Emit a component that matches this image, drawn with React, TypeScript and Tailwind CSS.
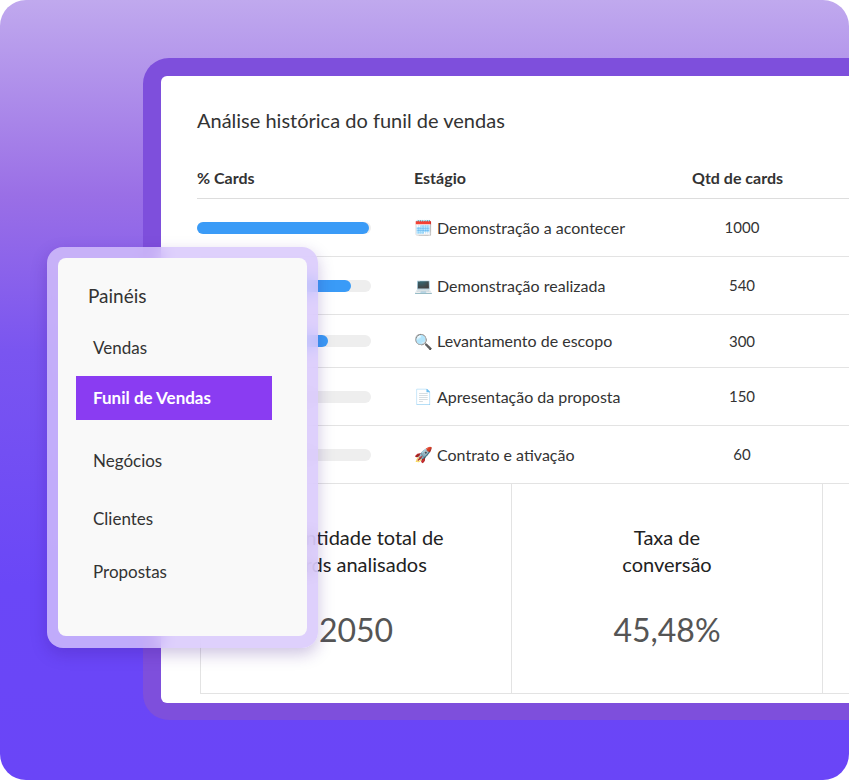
import React from "react";

const rows = [
  { icon: "🗓️", label: "Demonstração a acontecer", qtd: "1000", w: 172 },
  { icon: "💻", label: "Demonstração realizada", qtd: "540", w: 154 },
  { icon: "🔍", label: "Levantamento de escopo", qtd: "300", w: 131 },
  { icon: "📄", label: "Apresentação da proposta", qtd: "150", w: 90 },
  { icon: "🚀", label: "Contrato e ativação", qtd: "60", w: 60 },
];

export default function App() {
  return (
    <div
      className="relative w-[849px] h-[780px] overflow-hidden rounded-[26px] bg-[linear-gradient(180deg,#c0a9ee_0%,#9a6fe6_25%,#7a55f0_45%,#6a47f7_75%,#6a45f7_100%)]"
      style={{ fontFamily: "Lato, 'Open Sans', sans-serif" }}
    >
      <div className="ml-[143px] mt-[58px] rounded-l-[26px] bg-[#7e4fdc] pl-[18px] pt-[18px] pb-[17px]">
        <div className="h-[627px] rounded-l-md bg-white pl-[36px] pt-[32px]">
          <h1 className="text-[20px] text-[#333] leading-[24px]">Análise histórica do funil de vendas</h1>
          <div className="mt-[34px] flex h-[33px] items-start border-b border-[#ddd] text-[16px] font-bold text-[#333]">
            <div className="w-[217px]">% Cards</div>
            <div className="w-[278px]">Estágio</div>
            <div>Qtd de cards</div>
          </div>
          {rows.map((r, i) => (
            <div key={i} className={`flex items-center border-b border-[#e3e3e3] text-[16px] text-[#333] ${i === 3 ? "h-[58px]" : i === 2 ? "h-[53px]" : "h-[58px]"}`}>
              <div className="w-[217px]">
                <div className="h-[12px] w-[174px] rounded-full bg-[#eeeeee]">
                  <div className="h-[12px] rounded-full bg-[#3a9bf7]" style={{ width: r.w }} />
                </div>
              </div>
              <div className="w-[278px] flex items-center gap-[4px]">
                <span className="text-[15px]">{r.icon}</span>
                <span>{r.label}</span>
              </div>
              <div className="w-[100px] text-center text-[15px]">{r.qtd}</div>
            </div>
          ))}
          <div className="ml-[3px] flex h-[210px] border-b border-[#e3e3e3]">
            {[
              ["Quantidade total de", "cards analisados", "2050"],
              ["Taxa de", "conversão", "45,48%"],
              ["", "", ""],
            ].map((c, i) => (
              <div key={i} className={`flex w-[311px] shrink-0 flex-col items-center border-l border-[#e3e3e3] pt-[40px] ${i === 2 ? "" : ""}`}>
                <div className="text-center text-[20px] leading-[27px] text-[#222]">{c[0]}<br />{c[1]}</div>
                <div className="mt-[28px] text-[32px] text-[#555]">{c[2]}</div>
              </div>
            ))}
          </div>
        </div>
      </div>

      <div className="absolute left-[47px] top-[247px] w-[271px] h-[401px] rounded-[16px] bg-[#d6c4fb]/80 p-[11px] shadow-[0_6px_16px_rgba(60,20,140,0.25)] backdrop-blur-sm">
        <div className="h-[378px] rounded-[8px] bg-[#f9f9f9] pt-[24px]">
          <div className="pl-[30px] text-[19px] text-[#333]">Painéis</div>
          <div className="mt-[24px] pl-[35px] text-[17px] text-[#333]">Vendas</div>
          <div className="mt-[16px] ml-[18px] flex h-[44px] w-[196px] items-center bg-[#8a3cf2] pl-[17px] text-[17px] font-bold text-white">Funil de Vendas</div>
          <div className="mt-[28px] pl-[35px] text-[17px] text-[#333]">Negócios</div>
          <div className="mt-[32px] pl-[35px] text-[17px] text-[#333]">Clientes</div>
          <div className="mt-[28px] pl-[35px] text-[17px] text-[#333]">Propostas</div>
        </div>
      </div>
    </div>
  );
}
